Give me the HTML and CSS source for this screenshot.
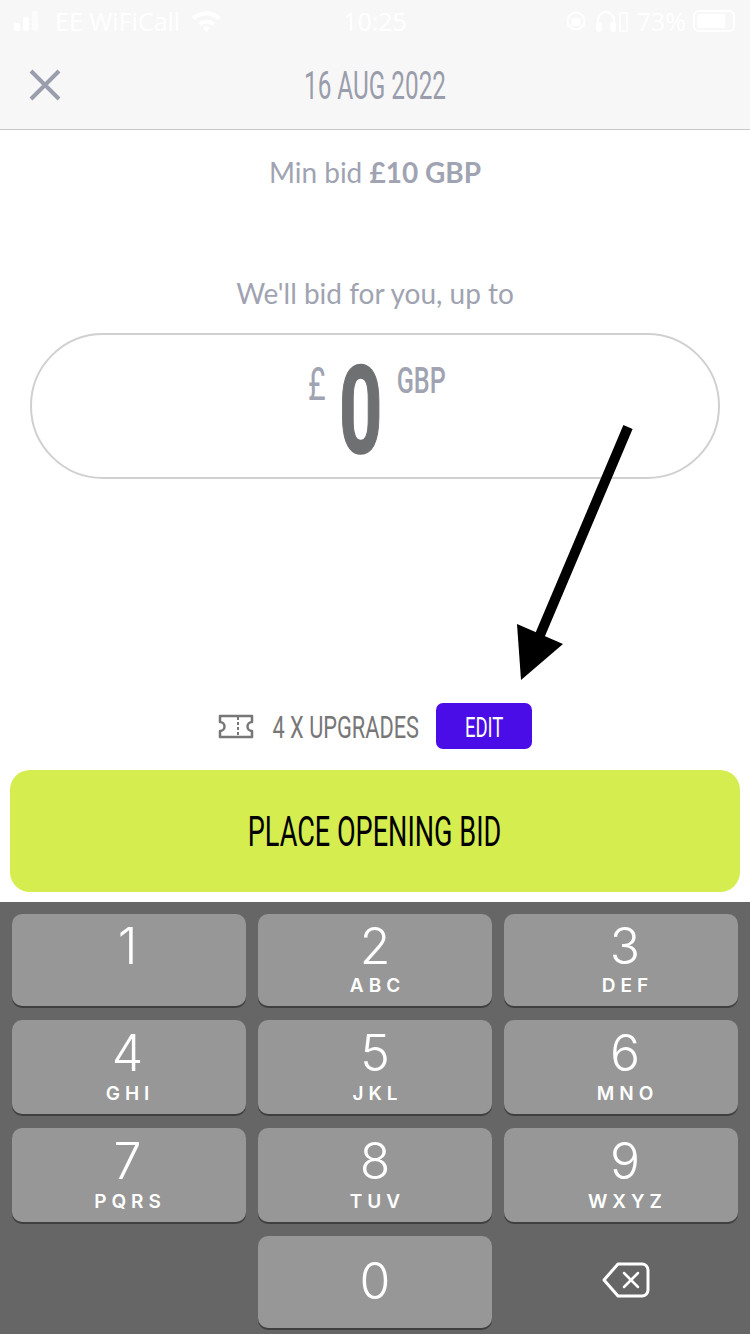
FILE: index.html
```html
<!DOCTYPE html>
<html lang="en">
<head>
    <meta charset="UTF-8">
    <meta name="viewport" content="width=device-width, initial-scale=1.0">
    <title>Place Bid</title>
    <link rel="stylesheet" href="styles.css">
</head>
<body>

    <div class="top">
        <div class="status">
            <div class="status-left">
                <svg class="signal" width="26" height="20" viewBox="0 0 26 20"><rect x="0" y="12" width="6" height="8" rx="2"/><rect x="9" y="6" width="6" height="14" rx="2"/><rect x="18" y="0" width="6" height="20" rx="2" opacity=".6"/></svg>
                <span class="carrier">EE WiFiCall</span>
                <svg class="wifi" width="31" height="24" viewBox="0 0 31 24"><path d="M1 8a21 21 0 0 1 29 0l-3 3a17 17 0 0 0-23 0z"/><path d="M7 14a13 13 0 0 1 17 0l-3 3a8 8 0 0 0-11 0z"/><path d="M12 19a5 5 0 0 1 7 0l-3.500 4z"/></svg>
            </div>
            <span class="time">10:25</span>
            <div class="status-right">
                <svg class="lock" width="20" height="24" viewBox="0 0 20 24" fill="none" stroke="#fff" stroke-width="2"><circle cx="10" cy="12" r="8.500"/><rect x="6.500" y="10" width="7" height="6" fill="#fff"/></svg>
                <svg width="20" height="24" viewBox="0 0 20 24" fill="none" stroke="#fff" stroke-width="2"><path d="M2 20v-9a8 8 0 0 1 16 0v9"/><rect x="1" y="14" width="4" height="8" rx="2" fill="#fff"/><rect x="15" y="14" width="4" height="8" rx="2" fill="#fff"/></svg>
                <svg width="9" height="24" viewBox="0 0 9 24" fill="none" stroke="#fff" stroke-width="1.500"><rect x="1" y="4" width="7" height="18"/></svg>
                <span class="pct">73%</span>
                <div class="battery"><div class="battery-fill"></div></div>
            </div>
        </div>
        <div class="header">
            <svg class="close" width="32" height="32" viewBox="0 0 32 32"><path d="M2 2l28 28M30 2L2 30" stroke="#9a9dab" stroke-width="4" fill="none"/></svg>
            <span class="cond date">16 AUG 2022</span>
        </div>
    </div>

    <div class="main">
        <p class="min-bid">Min bid <b>£10 GBP</b></p>
        <p class="upto">We'll bid for you, up to</p>
        <div class="pill">
            <span class="cond pound">£</span>
            <span class="cond amount">0</span>
            <span class="cond gbp">GBP</span>
        </div>
    </div>

    <div class="upgrades">
        <svg class="ticket" width="36" height="25" viewBox="0 0 36 25" fill="none" stroke="#777" stroke-width="2.500"><path d="M2 2h32v6a4.500 4.500 0 0 0 0 9v6H2v-6a4.500 4.500 0 0 0 0-9z" stroke-linejoin="round"/><path d="M20 3v19" stroke-width="2" stroke-dasharray="3 2"/></svg>
        <span class="upgrade-label"><span class="cond upgrade-text">4 X UPGRADES</span></span>
        <div class="edit"><span class="cond">EDIT</span></div>
    </div>

    <div class="place"><span class="cond">PLACE OPENING BID</span></div>

    <div class="keyboard">
        <div class="key"><span class="num">1</span></div>
        <div class="key"><span class="num">2</span><span class="abc">ABC</span></div>
        <div class="key"><span class="num">3</span><span class="abc">DEF</span></div>
        <div class="key"><span class="num">4</span><span class="abc">GHI</span></div>
        <div class="key"><span class="num">5</span><span class="abc">JKL</span></div>
        <div class="key"><span class="num">6</span><span class="abc">MNO</span></div>
        <div class="key"><span class="num">7</span><span class="abc">PQRS</span></div>
        <div class="key"><span class="num">8</span><span class="abc">TUV</span></div>
        <div class="key"><span class="num">9</span><span class="abc">WXYZ</span></div>
        <div class="blank"></div>
        <div class="key zero"><span class="num">0</span></div>
        <div class="blank backspace">
            <svg width="48" height="36" viewBox="0 0 48 36" fill="none" stroke="#fff" stroke-width="3" stroke-linecap="round" stroke-linejoin="round"><path d="M16 2h24a6 6 0 0 1 6 6v20a6 6 0 0 1-6 6H16L2 18z"/><path d="M22 11l14 14M36 11L22 25" stroke-width="2.500"/></svg>
        </div>
    </div>

    <svg class="arrow" width="130" height="270" viewBox="0 0 130 270"><path d="M113 2L25 210" stroke="#000" stroke-width="10" fill="none"/><path d="M2 199l46 20-42 36z" fill="#000"/></svg>

</body>
</html>
```

FILE: styles.css
```css
* {
    box-sizing: border-box;
}
body {
    margin: 0;
    width: 750px;
    height: 1334px;
    overflow: hidden;
    background-color: #fff;
    font-family: Lato, sans-serif;
    position: relative;
}
.cond {
    display: inline-block;
    font-family: Roboto, sans-serif;
    white-space: nowrap;
    transform: scaleX(0.66);
}
.top {
    height: 130px;
    background-color: #f7f7f7;
    border-bottom: 1px solid #c8c8c8;
}
.status {
    height: 41px;
    padding: 0 14px;
    display: grid;
    grid-template-columns: 1fr auto 1fr;
    align-items: center;
    color: #fff;
    font-family: "Open Sans", sans-serif;
    font-size: 25px;
}
.status-left, .status-right {
    display: flex;
    align-items: center;
}
.status-right {
    justify-content: flex-end;
}
.status-left svg {
    fill: #fff;
}
.carrier {
    margin-left: 15px;
    white-space: nowrap;
}
.wifi {
    margin-left: 11px;
}
.status-right svg {
    margin-right: 3px;
}
.status-right .lock {
    margin-right: 10px;
}
.pct {
    margin: 0 7px 0 6px;
}
.battery {
    width: 42px;
    height: 22px;
    border: 2px solid #fff;
    border-radius: 6px;
    padding: 2px;
    margin-right: 1px;
}
.battery-fill {
    width: 28px;
    height: 14px;
    background-color: #fff;
    border-radius: 2px;
}
.header {
    height: 88px;
    display: flex;
    align-items: center;
    justify-content: center;
    position: relative;
}
.close {
    position: absolute;
    left: 29px;
    top: 28px;
}
.date {
    color: #9a9dab;
    font-size: 38px;
    margin-top: 2px;
    transform: scaleX(0.64);
}
.main {
    height: 573px;
    padding: 0 30px;
    text-align: center;
    color: #a0a3b1;
    font-size: 28px;
}
.min-bid {
    margin: 0;
    padding-top: 25px;
    line-height: 34px;
}
.upto {
    margin: 0;
    padding-top: 87px;
    line-height: 34px;
}
.pill {
    margin-top: 23px;
    height: 146px;
    border: 2px solid #d0d0d0;
    border-radius: 73px;
    display: flex;
    justify-content: center;
    padding-right: 9px;
}
.pound {
    width: 18px;
    font-size: 46px;
    margin-top: 22px;
    line-height: 54px;
    color: #a0a3b1;
}
.amount {
    width: 42px;
    margin: 2px 16px 0 8px;
    font-size: 122px;
    font-weight: 700;
    -webkit-text-stroke: 1.500px #6f7072;
    line-height: 150px;
    color: #6f7072;
    transform: scaleX(0.62);
}
.gbp {
    width: 48px;
    font-size: 37px;
    font-weight: 500;
    margin-top: 25px;
    line-height: 42px;
    color: #a0a3b1;
    transform: scaleX(0.68);
}
.upgrades {
    height: 46px;
    display: flex;
    justify-content: center;
    align-items: center;
}
.ticket {
    margin-right: 20px;
}
.upgrade-label {
    width: 147px;
    margin-right: 15px;
    padding: 2px 4px 0 0;
    display: flex;
    justify-content: center;
    color: #777;
    font-size: 32px;
}
.upgrade-text {
    transform: scaleX(0.68);
}
.edit {
    width: 96px;
    height: 46px;
    background-color: #4a0de8;
    color: #fff;
    border-radius: 7px;
    font-size: 28px;
    padding-top: 2px;
    display: flex;
    align-items: center;
    justify-content: center;
}
.place {
    margin: 21px 10px 0;
    height: 122px;
    background-color: #d5ed4f;
    border-radius: 20px;
    font-size: 42px;
    color: #000;
    display: flex;
    align-items: center;
    justify-content: center;
}
.place .cond {
    transform: scaleX(0.645);
}
.keyboard {
    margin-top: 10px;
    height: 432px;
    padding: 12px 12px 0;
    background-color: #666;
    display: grid;
    grid-template-columns: repeat(3, 234px);
    grid-template-rows: 92px 94px 94px 92px;
    column-gap: 12px;
    row-gap: 14px;
}
.key {
    background-color: #979797;
    border-radius: 10px;
    box-shadow: 0 2px 0 #3f3f3f;
    color: #fff;
    display: flex;
    flex-direction: column;
    align-items: center;
}
.key:nth-child(3n) {
    padding-left: 8px;
}
.key:nth-child(3n+1) {
    padding-right: 3px;
}
.num {
    font-family: Inter, sans-serif;
    font-weight: 300;
    font-size: 50px;
    line-height: 60px;
    height: 60px;
    padding-top: 2px;
}
.abc {
    font-family: Inter, sans-serif;
    font-weight: 600;
    font-size: 19px;
    letter-spacing: 5px;
    line-height: 20px;
    margin-top: 2px;
    padding-left: 5px;
}
.key:nth-child(n+4) .num {
    padding-top: 3px;
}
.key:nth-child(n+4) .abc {
    margin-top: 4px;
}
.zero .num {
    line-height: 84px;
}
.backspace {
    display: flex;
    align-items: center;
    justify-content: center;
    padding: 0 0 4px 10px;
}
.arrow {
    position: absolute;
    left: 515px;
    top: 425px;
}
```
